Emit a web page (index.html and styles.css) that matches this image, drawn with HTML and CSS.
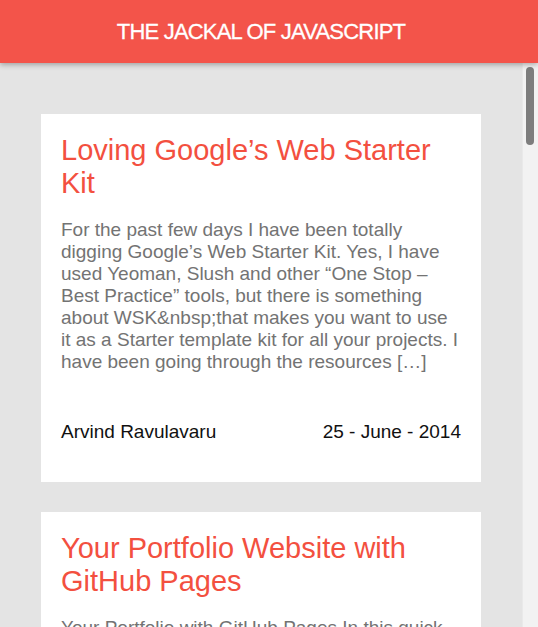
FILE: index.html
```html
<!DOCTYPE html>
<html lang="en">
<head>
<meta charset="utf-8">
<title>The Jackal of JavaScript</title>
<link rel="stylesheet" href="styles.css">
</head>
<body>
<header class="app-bar">
  <h1 class="app-title">THE JACKAL OF JAVASCRIPT</h1>
</header>
<div class="viewport">
  <main class="content">
    <div class="posts">
      <article class="card">
        <h2 class="card-title">Loving Google’s Web Starter Kit</h2>
        <p class="card-excerpt">For the past few days I have been totally digging Google’s Web Starter Kit. Yes, I have used Yeoman, Slush and other “One Stop – Best Practice” tools, but there is something about WSK&amp;nbsp;that makes you want to use it as a Starter template kit for all your projects. I have been going through the resources […]</p>
        <div class="card-meta"><span class="author">Arvind Ravulavaru</span><span class="date">25 - June - 2014</span></div>
      </article>
      <article class="card">
        <h2 class="card-title">Your Portfolio Website with GitHub Pages</h2>
        <p class="card-excerpt">Your Portfolio with GitHub Pages In this quick post, we will see how to set up a simple portfolio website for free using GitHub Pages and a custom domain, so you can showcase your work […]</p>
        <div class="card-meta"><span class="author">Arvind Ravulavaru</span><span class="date">14 - June - 2014</span></div>
      </article>
      <article class="card">
        <h2 class="card-title">Building a Hybrid App with Ionic and Firebase</h2>
        <p class="card-excerpt">In this post we will build a simple hybrid mobile application using the Ionic framework and Firebase as our backend. We will look at authentication, data binding and deploying the app to a real device […]</p>
        <div class="card-meta"><span class="author">Arvind Ravulavaru</span><span class="date">02 - June - 2014</span></div>
      </article>
    </div>
  </main>
  <div class="scrollbar" aria-hidden="true">
    <div class="scrollbar-thumb"></div>
  </div>
</div>
</body>
</html>
```
FILE: styles.css
```css
html, body {
  margin: 0;
  padding: 0;
  height: 100%;
}

body {
  display: flex;
  flex-direction: column;
  font-family: "Liberation Sans", Arial, sans-serif;
  background: #e4e4e4;
  overflow: hidden;
}

.app-bar {
  position: relative;
  z-index: 2;
  flex: 0 0 63px;
  height: 63px;
  background: #f3544a;
  box-shadow: 0 2px 5px rgba(0, 0, 0, 0.28);
  display: flex;
  align-items: center;
  justify-content: center;
  padding-right: 16px;
}

.app-title {
  margin: 0;
  color: #ffffff;
  font-size: 22px;
  font-weight: normal;
  letter-spacing: -0.8px;
  line-height: 1;
  -webkit-text-stroke: 0.3px #ffffff;
}

.viewport {
  flex: 1 1 auto;
  min-height: 0;
  display: flex;
}

.content {
  flex: 1 1 auto;
  min-width: 0;
  overflow: hidden;
  background: #e4e4e4;
}

.scrollbar {
  flex: 0 0 16px;
  box-sizing: border-box;
  background: #f2f2f2;
  border-left: 1px solid #e9e9e9;
  padding: 4px 4px 0 3px;
}

.scrollbar-thumb {
  height: 78px;
  background: #7d7d7d;
  border-radius: 4px;
}

.posts {
  padding: 51px 0 30px;
  display: flex;
  flex-direction: column;
  gap: 30px;
}

.card {
  width: 440px;
  margin: 0 0 0 41px;
  box-sizing: border-box;
  background: #ffffff;
  padding: 20px;
}

.card-title {
  margin: 0;
  color: #f3503f;
  font-size: 29px;
  font-weight: normal;
  line-height: 33px;
}

.card-excerpt {
  margin: 19px 0 0;
  color: #737373;
  font-size: 19px;
  line-height: 22px;
}

.card-meta {
  margin-top: 48px;
  padding-bottom: 19px;
  display: flex;
  justify-content: space-between;
  color: #111111;
  font-size: 19px;
  line-height: 22px;
}
```
